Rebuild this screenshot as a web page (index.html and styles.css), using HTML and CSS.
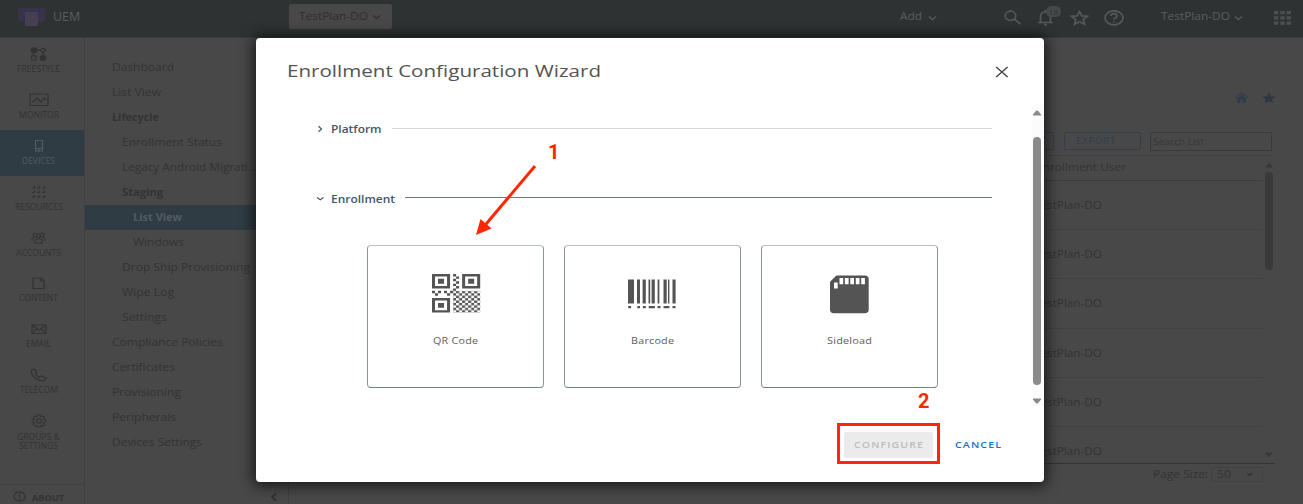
FILE: index.html
```html
<!DOCTYPE html>
<html lang="en">
<head>
<meta charset="utf-8">
<title>Enrollment Configuration Wizard</title>
<link rel="stylesheet" href="styles.css">
</head>
<body>
<div class="app">
  <header class="topbar">
    <svg class="logo" width="28" height="20" viewBox="0 0 28 20"><rect x="1" y="0" width="27" height="14" rx="2" fill="#39324a"/><rect x="8" y="4" width="13" height="14" rx="1" fill="#453f52"/></svg>
    <span class="brand"><span class="t" data-w="27">UEM</span></span>
    <div class="org"><span class="t" data-w="69">TestPlan-DO</span><svg width="9" height="6" viewBox="0 0 9 6"><path d="M1 1.5l3.5 3 3.5-3" fill="none" stroke="#303030" stroke-width="1.5"/></svg></div>
    <div class="add"><span class="t" data-w="22">Add</span><svg width="9" height="6" viewBox="0 0 9 6"><path d="M1 1.5l3.5 3 3.5-3" fill="none" stroke="#555859" stroke-width="1.5"/></svg></div>
    <div class="tools">
      <svg width="18" height="16" viewBox="0 0 18 16"><ellipse cx="6.5" cy="5.8" rx="5.3" ry="4.6" /><path d="M10.3 9l6 5"/></svg>
      <div class="bell"><svg width="18" height="16" viewBox="0 0 18 16"><path d="M1 12.5h15M3.500 12V7C3.500 3.500 5.500 2 8.500 2s5 1.500 5 5v5M7 14.700h3M8.500 0v2"/></svg><span class="badge">18</span></div>
      <svg width="19" height="16" viewBox="0 0 19 16"><path d="M9.500 1.500l2.300 4.400 5.700.4-4.300 3.300 1.400 4.700-5.100-2.600-5.100 2.600 1.400-4.700L1.500 6.300l5.700-.4z"/></svg>
      <svg width="20" height="17" viewBox="0 0 20 17"><ellipse cx="10" cy="7.800" rx="9" ry="7"/><path d="M7 6c0-3.200 6-3.200 6 0C13 8 10 7.800 10 9.500M10 11v1.600"/></svg>
    </div>
    <div class="user"><span class="t" data-w="69">TestPlan-DO</span><svg width="9" height="6" viewBox="0 0 9 6"><path d="M1 1.500l3.500 3 3.500-3" fill="none" stroke="#555859" stroke-width="1.500"/></svg></div>
    <svg class="grid-icon" width="17" height="14" viewBox="0 0 17 14"><path d="M0 0h4.300v3.300H0zM6.300 0h4.300v3.300H6.300zM12.600 0h4.300v3.300h-4.300zM0 5.200h4.300v3.300H0zM6.300 5.200h4.300v3.300H6.300zM12.600 5.200h4.300v3.300h-4.300zM0 10.400h4.300v3.300H0zM6.300 10.400h4.300v3.300H6.300zM12.600 10.400h4.300v3.300h-4.300z" fill="#4c5051"/></svg>
  </header>

  <div class="main">
    <nav class="rail">
      <div class="rail-item"><svg width="17" height="14" viewBox="0 0 17 14"><ellipse cx="4" cy="3.300" rx="3" ry="2.500" fill="#333"/><path d="M7 3.300h3M13 1l2.600 2.300L13 5.600l-2.600-2.300zM3.500 6v3M13 6v3M1.500 9H6v4H1.500z"/><ellipse cx="13" cy="11" rx="2.700" ry="2.300" fill="#333"/></svg><span class="t" data-w="43">FREESTYLE</span></div>
      <div class="rail-item"><svg width="20" height="14" viewBox="0 0 20 14"><path d="M1 1h18v11.500H1zM3 8.500h2L8 5l4 4 3-4 2 2"/></svg><span class="t" data-w="40">MONITOR</span></div>
      <div class="rail-item active"><svg width="12" height="14" viewBox="0 0 12 14"><path d="M2.500 1.500h7v10.500h-7zM2.500 9.500h7M5 11h2"/></svg><span class="t" data-w="33">DEVICES</span></div>
      <div class="rail-item"><svg width="15" height="14" viewBox="0 0 15 14"><path d="M1 3h2.500V1M6 3h2.500V1M11 3h2.500V1M1 7.500h2.500v-2M6 7.500h2.500v-2M11 7.500h2.500v-2M1 12h2.500v-2M6 12h2.500v-2M11 12h2.500v-2"/></svg><span class="t" data-w="48">RESOURCES</span></div>
      <div class="rail-item"><svg width="15" height="14" viewBox="0 0 15 14"><ellipse cx="7.500" cy="5" rx="2" ry="1.800"/><path d="M3.800 12V10c0-3 7.400-3 7.400 0v2zM4.500 5.500a2 1.700 0 1 1 .8-3M10.500 5.500a2 1.700 0 1 0-.8-3M1 10V8.500C1 7 2 6.500 3.500 6.500M14 10V8.500C14 7 13 6.500 11.500 6.500"/></svg><span class="t" data-w="45">ACCOUNTS</span></div>
      <div class="rail-item"><svg width="13" height="14" viewBox="0 0 13 14"><path d="M1 2h8l3 2.500v8H1zM8.500 2v3H12"/></svg><span class="t" data-w="39">CONTENT</span></div>
      <div class="rail-item"><svg width="16" height="14" viewBox="0 0 16 14"><path d="M1 3h14v8.500H1zM1 3l7 5 7-5M1 11.500l5-5M15 11.500l-5-5"/></svg><span class="t" data-w="25">EMAIL</span></div>
      <div class="rail-item"><svg width="17" height="14" viewBox="0 0 17 14"><path d="M1.500 2.500L4 1l3 3-1.500 1.500c.5 1.800 2 3 4 3.500L11 8l5 2-1.500 2.500C9 14 .5 8.500 1.500 2.500z"/></svg><span class="t" data-w="38">TELECOM</span></div>
      <div class="rail-item tall"><svg width="16" height="14" viewBox="0 0 16 14"><ellipse cx="8" cy="7" rx="2.600" ry="2.200"/><path d="M6.500 1h3l.5 1.500 2-.3 1.500 1.600-.8 1.400 2 1v2l-2 .8.8 1.400-1.500 1.500-2-.3-.5 1.400h-3L6 11.600l-2 .3-1.500-1.500.8-1.400-2-.8v-2l2-1-.8-1.400L4 2.200l2 .3z"/></svg><span class="t" data-w="43">GROUPS &amp;</span><span class="t" data-w="39">SETTINGS</span></div>
      <div class="about"><svg width="13" height="11" viewBox="0 0 13 11"><ellipse cx="6.500" cy="5.500" rx="5.500" ry="4.600"/><path d="M6.500 2.500v4M6.500 7.500v1"/></svg><span class="t" data-w="32">ABOUT</span></div>
    </nav>

    <aside class="menu">
      <div class="mi"><span class="t" data-w="62">Dashboard</span></div>
      <div class="mi"><span class="t" data-w="49">List View</span></div>
      <div class="mi b"><span class="t" data-w="47">Lifecycle</span></div>
      <div class="mi l2"><span class="t" data-w="100">Enrollment Status</span></div>
      <div class="mi l2"><span class="t" data-w="135">Legacy Android Migrati…</span></div>
      <div class="mi l2 b"><span class="t" data-w="41">Staging</span></div>
      <div class="mi l3 b on"><span class="t" data-w="49">List View</span></div>
      <div class="mi l3"><span class="t" data-w="51">Windows</span></div>
      <div class="mi l2"><span class="t" data-w="128">Drop Ship Provisioning</span></div>
      <div class="mi l2"><span class="t" data-w="52">Wipe Log</span></div>
      <div class="mi l2"><span class="t" data-w="45">Settings</span></div>
      <div class="mi"><span class="t" data-w="111">Compliance Policies</span></div>
      <div class="mi"><span class="t" data-w="63">Certificates</span></div>
      <div class="mi"><span class="t" data-w="69">Provisioning</span></div>
      <div class="mi"><span class="t" data-w="64">Peripherals</span></div>
      <div class="mi"><span class="t" data-w="90">Devices Settings</span></div>
      <svg class="collapse" width="8" height="10" viewBox="0 0 8 10"><path d="M6 1.500L2 5l4 3.500" fill="none" stroke="#303030" stroke-width="1.800"/></svg>
    </aside>

    <section class="content">
      <div class="quick">
        <svg width="13" height="11" viewBox="0 0 13 11"><path d="M6.500 0L0 5l1 .8 5.500-4.200 5.500 4.200 1-.8zM6.500 2.500L2 6.300V11h3.200V7.500h2.600V11H11V6.300z" fill="#303d4b"/></svg>
        <svg width="14" height="12" viewBox="0 0 14 12"><path d="M7 .5l2 3.700 4.500.3-3.400 2.800L11.300 11.300 7 9l-4.300 2.300 1.200-4L.5 4.500 5 4.200z" fill="#2d3843"/></svg>
      </div>
      <div class="actions">
        <div class="btn refresh"><svg width="9" height="9" viewBox="0 0 9 9"><path d="M1 4a3.500 3 0 0 1 6-2M8 5a3.500 3 0 0 1-6 2M7 0v2.500H4.500M2 9V6.500h2.500" fill="none" stroke="#303e4e"/></svg></div>
        <div class="btn export"><span class="t" data-w="39">EXPORT</span></div>
        <div class="search"><span class="t" data-w="51">Search List</span></div>
      </div>
      <div class="table">
        <div class="rows">
          <div class="th"><span class="t" data-w="90">Enrollment User</span></div>
          <div class="td"><span class="t" data-w="68">TestPlan-DO</span></div>
          <div class="td"><span class="t" data-w="68">TestPlan-DO</span></div>
          <div class="td"><span class="t" data-w="68">TestPlan-DO</span></div>
          <div class="td"><span class="t" data-w="68">TestPlan-DO</span></div>
          <div class="td"><span class="t" data-w="68">TestPlan-DO</span></div>
          <div class="td last"><span class="t" data-w="68">TestPlan-DO</span></div>
        </div>
        <div class="bar">
          <svg width="8" height="6" viewBox="0 0 8 6"><path d="M4 .5L8 5.500H0z" fill="#393939"/></svg>
          <div class="thumb"></div>
          <svg class="down" width="8" height="6" viewBox="0 0 8 6"><path d="M4 5.500L8 .5H0z" fill="#393939"/></svg>
        </div>
      </div>
      <div class="pager"><span class="t" data-w="55">Page Size:</span><div class="select"><span class="t" data-w="14">50</span><svg width="7" height="5" viewBox="0 0 7 5"><path d="M1 1l2.500 2.500L6 1" fill="none" stroke="#303030" stroke-width="1.200"/></svg></div></div>
    </section>
  </div>
</div>

<div class="modal">
  <div class="modal-head">
    <h1><span class="t" data-w="314">Enrollment Configuration Wizard</span></h1>
    <svg width="14" height="12" viewBox="0 0 14 12"><path d="M1.200 1l11.400 10M12.600 1L1.200 11" stroke="#454545" stroke-width="1.500"/></svg>
  </div>
  <div class="modal-body">
    <div class="steps">
      <div class="step"><svg width="12" height="8" viewBox="0 0 12 8"><path d="M4.500 1.300L7.500 4l-3 2.700" fill="none" stroke="#455766" stroke-width="1.200"/></svg><span class="t" data-w="50.500">Platform</span><i class="rule light"></i></div>
      <div class="step second"><svg width="12" height="8" viewBox="0 0 12 8"><path d="M3 2.500l3.300 2.300 3.200-2.300" fill="none" stroke="#455766" stroke-width="1.200"/></svg><span class="t" data-w="64">Enrollment</span><i class="rule"></i></div>
      <div class="cards">
        <div class="card qr">
          <svg width="50" height="40" viewBox="0 0 16.600 16.600" preserveAspectRatio="none">
            <defs><pattern id="check" width="2" height="2" patternUnits="userSpaceOnUse"><path d="M0 1h1v1H0zM1 0h1v1H1z" fill="#545454"/></pattern></defs>
            <g fill="#545454" fill-rule="evenodd"><path d="M0 0h6v6H0zM1 1v4h4V1zM2 2h2v2H2z"/><path d="M10 0h6v6h-6zM11 1v4h4V1zM12 2h2v2h-2z"/><path d="M0 10h6v6H0zM1 11v4h4v-4zM2 12h2v2H2z"/>
            <path d="M7 0h1v1H7zM8 1h1v1H8zM7 2h1v1H7zM8 3h1v1H8zM7 4h1v1H7zM8 5h1v1H8zM7 6h1v1H7zM0 7h1v1H0zM2 7h1v1H2zM4 7h1v1H4zM6 7h1v1H6zM1 8h1v1H1zM5 8h1v1H5z"/></g>
            <rect x="7" y="7" width="9" height="9" fill="url(#check)"/>
          </svg>
          <span class="t" data-w="45">QR Code</span>
        </div>
        <div class="card">
          <svg width="50" height="40" viewBox="0 0 50 40"><path d="M1 5.500h6v24H1zM10 5.500h3v24h-3zM15.600 5.500h3.200v24h-3.200zM21.500 5.500h1.700v24h-1.700zM24.600 5.500h3.200v24h-3.200zM30.600 5.500h1.800v24h-1.800zM36.500 5.500h3.200v24h-3.200zM41 5.500h1.400v24H41zM45.500 5.500h3.100v24h-3.100zM1.200 32h2.900v2.300H1.200zM10.300 32h2.700v2.300h-2.700zM15.900 32h2.900v2.300h-2.900zM21.700 32h6.200v2.300h-6.200zM30.500 32h3v2.300h-3zM36.500 32h5.900v2.300h-5.900zM45.500 32h3v2.300h-3z" fill="#545454"/></svg>
          <span class="t" data-w="43">Barcode</span>
        </div>
        <div class="card">
          <svg width="50" height="40" viewBox="0 0 50 40"><path d="M13.300 1.500H41c2.300 0 3.700 1.300 3.700 3.300v31c0 2-1.400 3.400-3.700 3.400H9.700C7.400 39.200 6 37.800 6 35.800V9c0-1 .4-1.700 1.300-2.400l4-4c.5-.7 1-1.100 2-1.100z" fill="#545454"/><path d="M15.500 4h3.700v6.200h-3.700zM20.900 4h3.700v6.200h-3.700zM26.300 4H30v6.200h-3.700zM31.800 4h3.700v6.200h-3.700zM37.200 4h3.700v6.200h-3.700zM10 8.600h3.700v6H10z" fill="#fff"/></svg>
          <span class="t" data-w="45">Sideload</span>
        </div>
      </div>
    </div>
    <div class="mbar">
      <svg width="10" height="6" viewBox="0 0 10 6"><path d="M4 .8Q5 0 6 .8L9 4.500Q9.500 5.500 8.500 5.600h-7Q.5 5.500 1 4.500z" fill="#8a8a8a"/></svg>
      <div class="mthumb"></div>
      <svg width="10" height="6" viewBox="0 0 10 6"><path d="M4 5.200Q5 6 6 5.200L9 1.500Q9.500.5 8.500.4h-7Q.5.500 1 1.500z" fill="#8a8a8a"/></svg>
    </div>
  </div>
  <div class="modal-foot">
    <div class="frame"><div class="configure"><span class="t" data-w="69">CONFIGURE</span></div></div>
    <div class="cancel"><span class="t" data-w="46">CANCEL</span></div>
  </div>
</div>
<svg class="arrow" width="70" height="80" viewBox="0 0 70 80"><path d="M65 6L14 66.500" stroke="#ff2600" stroke-width="3"/><path d="M6 75L10.500 59l11 9.500z" fill="#ff2600"/></svg>
<span class="mark one">1</span>
<span class="mark two">2</span>
<script src="fit.js"></script>
</body>
</html>
```
FILE: styles.css
```css
* { box-sizing: border-box; }
body { margin: 0; width: 1303px; height: 504px; overflow: hidden; position: relative; font: 11px/14px "Open Sans", "Noto Sans", sans-serif; color: #333; background: #484848; }
svg { display: block; flex: none; }
.t { display: inline-block; white-space: nowrap; transform-origin: 0 50%; flex: none; }
.app { height: 504px; display: flex; flex-direction: column; }
.topbar { height: 38px; background: #2e3233; display: flex; border-bottom: 1px solid #3a3d3e; color: #5a5d5e; }
.logo { margin: 8px 0 0 17px; }
.brand { margin: 10px 0 0 8px; width: 30px; font-size: 12px; }
.org { margin: 4px 0 0 206px; width: 103px; height: 25px; background: #484848; border-radius: 2px; display: flex; align-items: center; gap: 4px; padding: 0 0 2px 10px; color: #2f2f2f; }
.org svg { margin-top: 3px; }
.add { margin: 9px 0 0 508px; width: 64px; display: flex; gap: 6px; }
.add svg, .user svg { margin-top: 6px; }
.tools { display: flex; margin: 10px 0 0 40px; width: 121px; gap: 0 15px; }
.tools svg { fill: none; stroke: #555859; stroke-width: 1.7; }
.bell { position: relative; }
.badge { position: absolute; left: 9px; top: -4px; width: 15px; height: 11px; border-radius: 6px; background: #45494a; color: #2e3233; font-size: 8px; line-height: 11px; text-align: center; }
.user { margin: 9px 0 0 36px; width: 84px; display: flex; gap: 4px; }
.grid-icon { margin: 11px 0 0 29px; }
.main { flex: 1; display: flex; min-height: 0; }
.rail { width: 84.5px; border-right: 1px solid #3f3f3f; display: flex; flex-direction: column; font-size: 8.500px; line-height: 9px; }
.rail-item { height: 45.9px; flex: none; padding-top: 9px; display: flex; flex-direction: column; align-items: center; gap: 3px; margin-right: 6px; }
.rail-item svg, .about svg { fill: none; stroke: #333; stroke-width: 1.2; }
.rail-item:first-child { padding-top: 8.500px; }
.rail-item.active { background: #2f3c44; color: #535b60; margin-right: 0; padding-right: 6px; }
.rail-item.active svg { stroke: #535b60; }
.rail-item.tall { height: 78.800px; gap: 4px; }
.rail-item.tall span + span { margin-top: -4px; }
.about { flex: 1; border-top: 1px solid #424242; padding: 6px 0 0 13px; display: flex; gap: 6px; font-weight: 700; line-height: 13px; font-size: 9px; }
.menu { width: 204px; padding-top: 17px; border-right: 1px solid #404040; }
.mi { height: 25px; padding: 5px 0 0 27px; }
.l2 { padding-left: 37.500px; }
.l3 { padding-left: 48px; }
.b { font-weight: 700; }
.on { background: #2f3c44; color: #535b60; }
.collapse { margin: 37px 0 0 185px; }
.content { flex: 1; }
.quick { display: flex; justify-content: flex-end; gap: 14px; padding: 54px 27px 0 0; }
.actions { display: flex; justify-content: flex-end; gap: 9px; margin: 28px 31px 0 0; font-size: 9px; }
.btn { height: 17.500px; border: 1px solid #303e4e; border-radius: 2px; }
.refresh { width: 33px; padding: 3px 0 0 16px; margin-right: 1px; }
.export { width: 77px; padding: 1px 0 0 11px; color: #303e4e; letter-spacing: .8px; }
.search { width: 122px; height: 18.500px; border: 1px solid #3a3a3a; padding: 2px 0 0 2px; font-size: 9.500px; color: #363636; }
.table { margin: 4px 28px 0 20px; border-top: 1px solid #424242; border-bottom: 1px solid #343434; height: 309px; display: flex; overflow: hidden; justify-content: space-between; }
.rows { width: 954px; }
.th { height: 25.500px; padding: 4px 0 0 727px; border-bottom: 1px solid #3b3b3b; }
.td { height: 49.200px; padding: 17px 0 0 725.500px; border-bottom: 1px solid #414141; }
.bar { width: 10px; padding: 6px 0 0; display: flex; flex-direction: column; }
.thumb { width: 8px; height: 98px; margin-top: 4px; border-radius: 4px; background: #393939; flex: none; }
.down { margin-top: 182px; }
.pager { display: flex; justify-content: flex-end; margin: 3px 40px 0 0; gap: 3px; }
.select { width: 52px; height: 15px; border: 1px solid #414141; padding: 0 9px 0 5px; display: flex; justify-content: space-between; align-items: center; }

.modal { position: absolute; left: 256px; top: 38px; width: 788px; height: 444px; background: #fff; border-radius: 4px; box-shadow: 0 1px 14px 3px rgba(0,0,0,.65); display: flex; flex-direction: column; }
.modal-head { height: 66px; display: flex; justify-content: space-between; align-items: flex-start; padding: 22px 35px 0 31px; color: #545454; }
.modal-head h1 { margin: 0; font-size: 17px; font-weight: 400; line-height: 22px; }
.modal-head svg { margin-top: 5.500px; }
.modal-body { height: 302px; display: flex; }
.steps { flex: 1; padding: 18px 39px 0 58px; }
.step { display: flex; align-items: center; height: 14px; font-weight: 600; color: #455766; }
.step .t { margin-left: 5px; }
.second { margin-top: 55.500px; }
.rule { flex: 1; height: 1px; background: #6d7681; margin: -2px 0 0 10px; }
.rule.light { background: #d5d7d8; margin-top: -1px; }
.cards { display: flex; gap: 20px; margin: 39px 0 0 52.500px; }
.card { width: 177px; height: 143px; border: 1px solid #8795a3; border-top-color: #b9bfc6; border-bottom-color: #6f8394; border-radius: 4px; display: flex; flex-direction: column; align-items: center; padding-top: 28px; font-size: 9.700px; color: #5c5c5c; letter-spacing: .2px; }
.card .t { margin-top: 20.500px; }
.qr svg { margin-left: 3px; }
.mbar { width: 13px; background: #fbfbfb; display: flex; flex-direction: column; align-items: center; padding: 6px 1px 0 0; }
.mthumb { width: 8px; height: 248px; margin: 21px 0 13px; border-radius: 4px; background: #8a8a8a; }
.modal-foot { display: flex; justify-content: flex-end; padding: 16.500px 43px 0 0; font-size: 9.500px; font-weight: 600; letter-spacing: 1px; }
.frame { width: 103px; height: 41px; border: 3px solid #ff2600; padding: 6.500px 3.500px 0 4.500px; }
.configure { height: 25.500px; background: #ebebeb; border-radius: 2px; color: #bdbdbd; padding: 6px 0 0 10px; }
.cancel { color: #1c70c8; margin: 15.500px 0 0 15.500px; width: 46px; }
.arrow { position: absolute; left: 470px; top: 160px; }
.mark { position: absolute; font: bold 20px/20px Roboto, sans-serif; color: #ff2600; }
.one { left: 548px; top: 142px; }
.two { left: 918px; top: 391px; }
```
FILE: fit.js
```js
document.querySelectorAll('.t[data-w]').forEach(function (el) {
  var natural = el.getBoundingClientRect().width;
  var target = parseFloat(el.dataset.w);
  var spare = parseFloat(getComputedStyle(el).letterSpacing) || 0;
  var k = target / (natural - spare);
  var column = getComputedStyle(el.parentNode).flexDirection === 'column' &&
    getComputedStyle(el.parentNode).display === 'flex';
  el.style.transform = 'scaleX(' + k + ')';
  el.style.width = natural + 'px';
  el.style.marginRight = (target - natural) + 'px';
  if (column) { el.style.alignSelf = 'center'; }
});
```
